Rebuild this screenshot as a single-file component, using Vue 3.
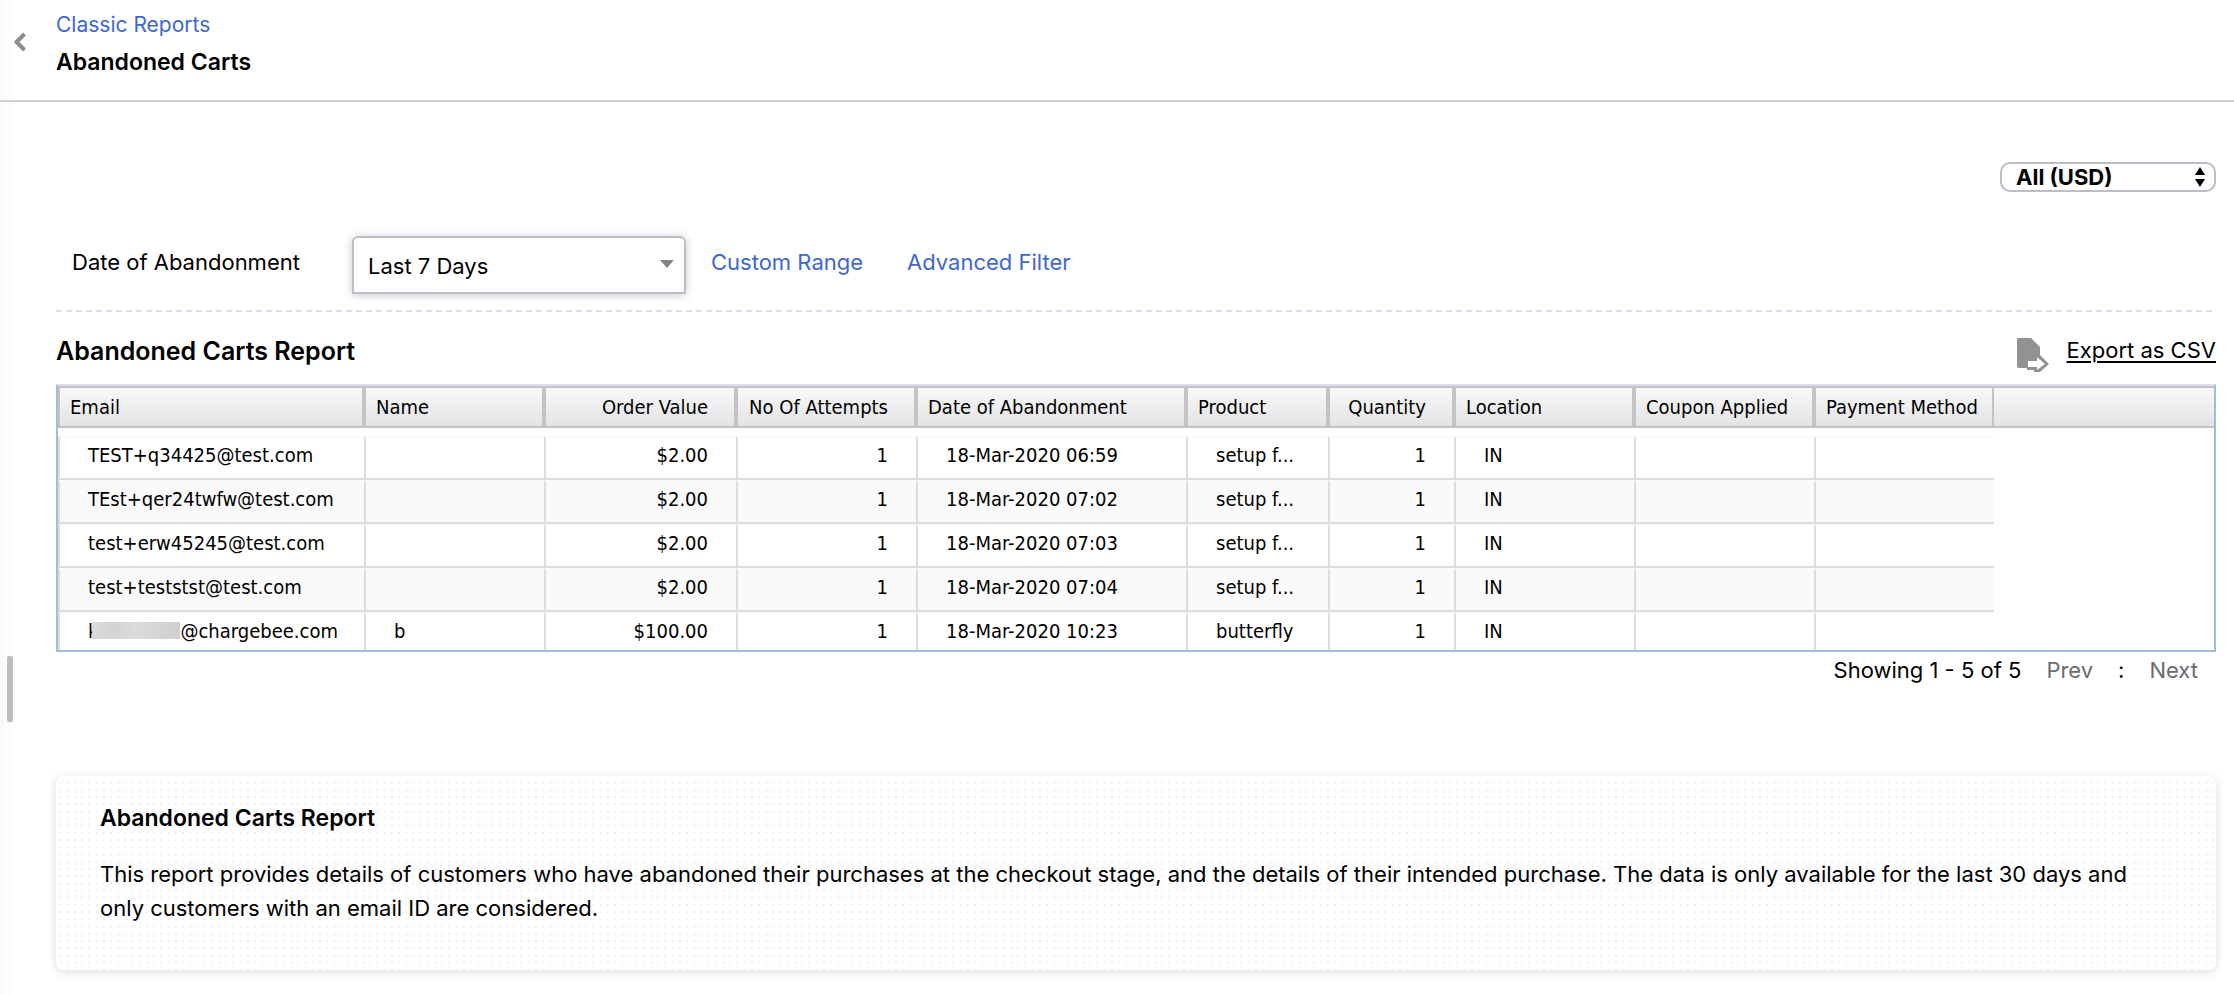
<script setup>
import { ref } from 'vue'

const currency = ref('all-usd')
const range = ref('7')

const columns = [
  { key: 'email', label: 'Email', size: 'w-email' },
  { key: 'name', label: 'Name', size: 'w-md' },
  { key: 'value', label: 'Order Value', size: 'w-value', right: true },
  { key: 'attempts', label: 'No Of Attempts', size: 'w-md', right: true },
  { key: 'date', label: 'Date of Abandonment', size: 'w-date' },
  { key: 'product', label: 'Product', size: 'w-product' },
  { key: 'quantity', label: 'Quantity', size: 'w-qty', right: true },
  { key: 'location', label: 'Location', size: 'w-md' },
  { key: 'coupon', label: 'Coupon Applied', size: 'w-md' },
  { key: 'payment', label: 'Payment Method', size: 'w-md' },
]

const rows = [
  { email: 'TEST+q34425@test.com', value: '$2.00', attempts: 1, date: '18-Mar-2020 06:59', product: 'setup f...', quantity: 1, location: 'IN' },
  { email: 'TEst+qer24twfw@test.com', value: '$2.00', attempts: 1, date: '18-Mar-2020 07:02', product: 'setup f...', quantity: 1, location: 'IN' },
  { email: 'test+erw45245@test.com', value: '$2.00', attempts: 1, date: '18-Mar-2020 07:03', product: 'setup f...', quantity: 1, location: 'IN' },
  { email: 'test+teststst@test.com', value: '$2.00', attempts: 1, date: '18-Mar-2020 07:04', product: 'setup f...', quantity: 1, location: 'IN' },
  { email: '@chargebee.com', masked: 'k', name: 'b', value: '$100.00', attempts: 1, date: '18-Mar-2020 10:23', product: 'butterfly', quantity: 1, location: 'IN' },
]
</script>

<template>
  <div class="page">
    <div class="edge-handle"></div>

    <header class="top">
      <button class="back" type="button" aria-label="Back">
        <svg width="12" height="20" viewBox="0 0 12 20">
          <path d="M10.500 2 L2.500 10 L10.500 18" fill="none" stroke="#8c8c8e" stroke-width="4" />
        </svg>
      </button>
      <div class="titles">
        <a class="crumb" href="#">Classic Reports</a>
        <h1>Abandoned Carts</h1>
      </div>
    </header>

    <main class="content">
      <div class="currency-row">
        <div class="currency">
          <select v-model="currency" aria-label="Currency">
            <option value="all-usd">All (USD)</option>
          </select>
          <svg class="updown" width="10" height="20" viewBox="0 0 10 20" aria-hidden="true">
            <path d="M5 0 L10 8 H0 Z M5 20 L10 12 H0 Z" fill="#000" />
          </svg>
        </div>
      </div>

      <div class="filters">
        <label for="range">Date of Abandonment</label>
        <div class="range">
          <select id="range" v-model="range">
            <option value="7">Last 7 Days</option>
          </select>
          <svg class="caret" width="14" height="8" viewBox="0 0 14 8" aria-hidden="true">
            <path d="M0 0 H14 L7 8 Z" fill="#868686" />
          </svg>
        </div>
        <a href="#">Custom Range</a>
        <a class="advanced" href="#">Advanced Filter</a>
      </div>
      <div class="rule"></div>

      <div class="report-head">
        <h2>Abandoned Carts Report</h2>
        <a class="export" href="#">
          <svg width="34" height="34" viewBox="0 0 34 34" aria-hidden="true">
            <path d="M2 0 H15 L24 9 V17 L33 26 L24 34 H18 V32 H11 V30 H3 Q1 30 1 28 V2 Q1 0 2 0 Z" fill="#929292" />
            <path d="M12 23 H21 V19 L29 26 L21 32 V29 H12 Z" fill="#fff" />
          </svg>
          <span>Export as CSV</span>
        </a>
      </div>

      <div class="grid">
        <table>
          <colgroup>
            <col v-for="c in columns" :key="c.key" :class="c.size" />
            <col />
          </colgroup>
          <thead>
            <tr>
              <th v-for="c in columns" :key="c.key" scope="col" :class="{ right: c.right }">{{ c.label }}</th>
              <td class="filler"></td>
            </tr>
          </thead>
          <tbody>
            <tr v-for="r in rows" :key="r.date">
              <td v-for="c in columns" :key="c.key" :class="{ right: c.right }">
                <template v-if="c.key === 'email' && r.masked">{{ r.masked }}<span class="mask"></span></template>{{ r[c.key] }}
              </td>
              <td class="filler"></td>
            </tr>
          </tbody>
        </table>
      </div>

      <div class="pager">
        <span>Showing 1 - 5 of 5</span>
        <button type="button">Prev</button>
        <span>:</span>
        <button type="button">Next</button>
      </div>

      <section class="about">
        <svg class="dots" aria-hidden="true">
          <defs>
            <pattern id="dot-grid" x="1" y="3" width="7.200" height="7.200" patternUnits="userSpaceOnUse">
              <circle cx="3.600" cy="3.600" r="1" fill="#e8e8ea" />
            </pattern>
          </defs>
          <rect width="100%" height="100%" fill="url(#dot-grid)" />
        </svg>
        <h3>Abandoned Carts Report</h3>
        <p>
          This report provides details of customers who have abandoned their purchases at the checkout stage, and the
          details of their intended purchase. The data is only available for the last 30 days and only customers with an
          email ID are considered.
        </p>
      </section>
    </main>
  </div>
</template>

<style>
body {
  background: #fff;
}
</style>

<style scoped>
.page {
  position: relative;
  min-height: 100vh;
  box-sizing: border-box;
  padding-bottom: 24px;
  background: linear-gradient(to right, #f9f9f9, #fff 14px);
  color: #000;
  font: 22px/32px Inter, "Liberation Sans", sans-serif;
}
h1,
h2,
h3,
p {
  margin: 0;
}
a {
  color: #3d67d2;
  text-decoration: none;
}
button,
select {
  font: inherit;
  color: inherit;
  background: none;
  border: 0;
  padding: 0;
  margin: 0;
}
.edge-handle {
  position: absolute;
  left: 7px;
  top: 656px;
  width: 6px;
  height: 66px;
  border-radius: 2px;
  background: #bebebe;
}
.top {
  display: flex;
  gap: 30px;
  padding: 9px 0 20px 14px;
  border-bottom: 2px solid #cfcfcf;
}
.back {
  width: 12px;
  height: 20px;
  margin-top: 23px;
}
.back svg {
  display: block;
}
.titles {
  display: flex;
  flex-direction: column;
  gap: 3px;
}
.crumb {
  font-size: 21px;
}
h1,
h3 {
  font-size: 23px;
  line-height: 36px;
  font-weight: 600;
}
.content {
  padding: 60px 18px 0 56px;
}
.currency-row {
  display: flex;
  justify-content: flex-end;
}
.currency,
.range {
  position: relative;
}
.currency select {
  appearance: none;
  display: block;
  width: 216px;
  height: 30px;
  padding: 0 14px;
  border: 2px solid #bdbdc7;
  border-radius: 10px;
  background: #fff;
  line-height: 26px;
  font-weight: 700;
}
.updown {
  position: absolute;
  right: 11px;
  top: 5px;
}
.filters {
  display: flex;
  align-items: flex-start;
  margin-top: 44px;
  padding-left: 16px;
}
.filters > label,
.filters > a {
  padding-top: 10px;
}
.filters > label {
  width: 280px;
}
.range {
  margin-right: 25px;
}
.range select {
  appearance: none;
  display: block;
  width: 334px;
  height: 58px;
  padding: 2px 14px 0;
  border: 2px solid #bdbdc7;
  border-radius: 6px 6px 0 0;
  background: #fff;
  box-shadow: 0 1px 10px rgba(0, 0, 0, 0.22);
}
.caret {
  position: absolute;
  right: 12px;
  top: 24px;
}
.advanced {
  margin-left: 44px;
}
.rule {
  height: 2px;
  margin-top: 16px;
  background: repeating-linear-gradient(to right, #dbe0ea 0 6px, #fff 6px 10px);
}
.report-head {
  display: flex;
  justify-content: space-between;
  align-items: flex-start;
  height: 46px;
  padding-top: 26px;
}
h2 {
  font-size: 25px;
  line-height: 26px;
  font-weight: 600;
}
.export {
  display: flex;
  gap: 17px;
  line-height: 24px;
  color: #000;
}
.export span {
  text-decoration: underline;
  text-decoration-thickness: 2px;
  text-underline-offset: 3px;
}
.grid {
  border: 2px solid #9fbbe6;
  border-top-color: #d9dfec;
}
table {
  width: 100%;
  table-layout: fixed;
  border-spacing: 0;
  font: 20px/24px "DejaVu Sans Condensed", "DejaVu Sans", sans-serif;
}
.w-email { width: 306px; }
.w-md { width: 180px; }
.w-value { width: 192px; }
.w-date { width: 270px; }
.w-product { width: 142px; }
.w-qty { width: 126px; }
th,
td {
  box-sizing: border-box;
  white-space: nowrap;
  text-align: left;
}
thead th,
thead .filler {
  height: 42px;
  padding: 0 0 0 10px;
  border: 2px solid #c3c3c3;
  background: linear-gradient(#f9f9f9, #e2e3e5);
  font-weight: 400;
}
thead .filler {
  border-width: 2px 0;
}
thead th.right {
  padding-right: 26px;
}
tbody::before {
  content: "";
  display: block;
  height: 8px;
}
tbody td {
  height: 44px;
  padding: 5px 0 0 28px;
  vertical-align: top;
  border: 2px solid #dcdcdc;
  border-top-color: #fafafa;
  border-right: 0;
}
tbody td.right {
  padding-right: 28px;
}
tbody tr:nth-child(even) td {
  background: #fafafa;
}
tbody tr:last-child td {
  height: 38px;
  border-bottom: 0;
}
tbody tr td.filler {
  border: 0;
  background: #fff;
}
.right {
  text-align: right;
}
.mask {
  position: relative;
  display: inline-block;
  width: 88px;
  height: 17px;
  margin: 3px 0 0 -6px;
  vertical-align: top;
  background: linear-gradient(100deg, #dcdcdc, #d2d3d2 25%, #dbdbdb 50%, #d3d4d3 75%, #cfcfcf);
}
.pager {
  display: flex;
  justify-content: flex-end;
  gap: 25px;
  padding: 2px 18px 0 0;
}
.pager button {
  color: #6b6b70;
}
.about {
  position: relative;
  margin-top: 90px;
  padding: 24px 44px 45px;
  border-radius: 8px;
  box-shadow: 0 2px 10px rgba(0, 0, 0, 0.14);
  overflow: hidden;
  background: #fff;
}
.dots {
  position: absolute;
  inset: 0;
  width: 100%;
  height: 100%;
}
.about h3,
.about p {
  position: relative;
}
p {
  margin-top: 21px;
  line-height: 34px;
}
</style>
